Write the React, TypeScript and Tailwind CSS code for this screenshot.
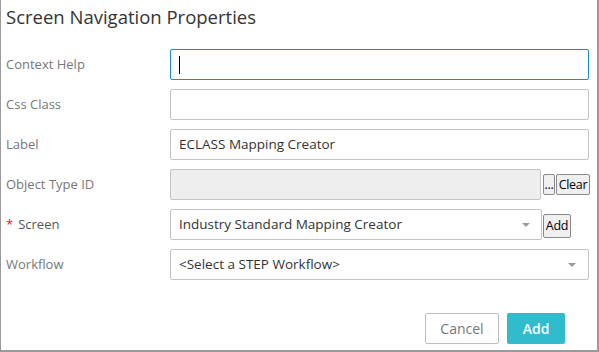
const Caret = () => (
  <svg width="8" height="4" viewBox="0 0 8 4" className="shrink-0">
    <path d="M0 0 L8 0 L4 4 Z" fill="#999" />
  </svg>
);

const Row = ({ label, required, children }: { label: string; required?: boolean; children: React.ReactNode }) => (
  <div className="flex h-[31px] items-center">
    <div className="w-[169px] shrink-0 pl-[5px] text-[13px] text-[#777]">
      {required && <span className="mr-[5px] text-[#e02020]">*</span>}
      <span className={required ? "text-[#555]" : ""}>{label}</span>
    </div>
    <div className="flex h-full flex-1 items-center">{children}</div>
  </div>
);

const SmallButton = ({ width, children }: { width: string; children: React.ReactNode }) => (
  <button
    className={`ml-[1px] h-[21px] rounded-[2px] border border-[#8a8a8a] bg-[#f0f0f0] p-0 text-center text-[12.5px] leading-[18px] tracking-[-0.3px] text-black ${width}`}
  >
    {children}
  </button>
);

export default function App() {
  return (
    <div
      className="h-[352px] w-[599px] border-b-2 border-l border-r-2 border-[#9a9a9a] bg-white"
      style={{ fontFamily: '"Open Sans", "Noto Sans", sans-serif' }}
    >
      <h1 className="pl-[5px] pt-[3px] text-[18.5px] leading-[27px] text-[#333]">Screen Navigation Properties</h1>

      <div className="mt-[19px] flex flex-col gap-[9px] pr-[8px]">
        <Row label="Context Help">
          <div className="flex h-full w-full items-center rounded-[2px] border border-[#1a8ed0] px-[8px]">
            <div className="h-[18px] w-[1px] bg-black" />
          </div>
        </Row>
        <Row label="Css Class">
          <div className="h-full w-full rounded-[2px] border border-[#c4c4c4]" />
        </Row>
        <Row label="Label">
          <div className="flex h-full w-full items-center rounded-[2px] border border-[#c4c4c4] px-[8px] text-[13.5px] text-[#333]">
            ECLASS Mapping Creator
          </div>
        </Row>
        <Row label="Object Type ID">
          <div className="h-full w-[371px] shrink-0 rounded-[2px] border border-[#c4c4c4] bg-[#eeeeee]" />
          <div className="ml-[1px] flex">
            <SmallButton width="w-[12px]">...</SmallButton>
            <SmallButton width="w-[34px]">Clear</SmallButton>
          </div>
        </Row>
        <Row label="Screen" required>
          <div className="flex h-full w-[372px] shrink-0 items-center justify-between rounded-[2px] border border-[#c4c4c4] pl-[8px] pr-[11px] text-[13.5px] text-[#333]">
            <span>Industry Standard Mapping Creator</span>
            <Caret />
          </div>
          <div className="mt-[1px]">
            <button className="ml-[1px] h-[24px] w-[28px] rounded-[2px] border border-[#8a8a8a] bg-[#f0f0f0] p-0 text-[12.5px] tracking-[-0.2px] text-black">
              Add
            </button>
          </div>
        </Row>
        <Row label="Workflow">
          <div className="flex h-full w-full items-center justify-between rounded-[2px] border border-[#c4c4c4] pl-[8px] pr-[12px] text-[13.5px] text-[#333]">
            <span>&lt;Select a STEP Workflow&gt;</span>
            <Caret />
          </div>
        </Row>
      </div>

      <div className="mt-[33px] flex justify-end gap-[8px] pr-[32px]">
        <button className="h-[31px] w-[74px] rounded-[2px] border border-[#bdbdbd] bg-white text-[14px] text-[#777]">
          Cancel
        </button>
        <button className="h-[31px] w-[58px] rounded-[2px] bg-[#31bccd] text-[14px] font-semibold text-white">
          Add
        </button>
      </div>
    </div>
  );
}
